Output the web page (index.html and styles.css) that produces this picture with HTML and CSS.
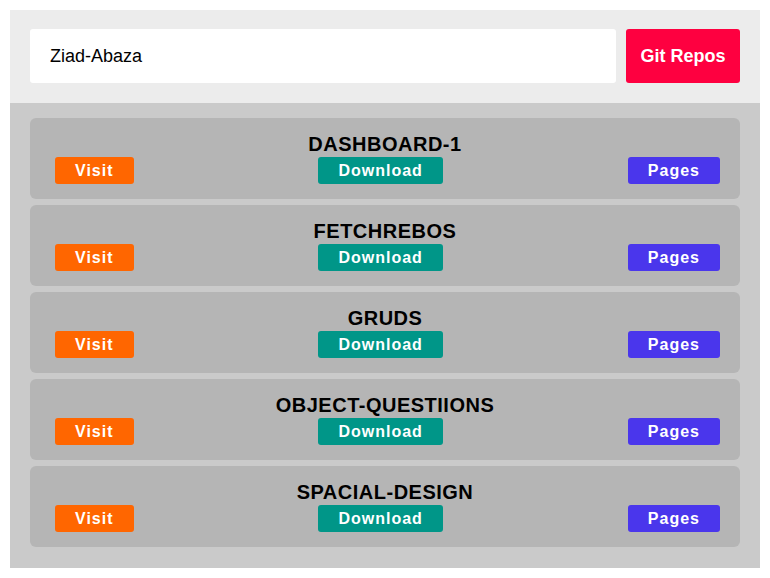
FILE: index.html
```html
<!DOCTYPE html>
<html>
<head>
<meta charset="utf-8">
<link rel="stylesheet" href="styles.css">
</head>
<body>
<div class="app">
  <div class="search">
    <input class="search-input" type="text" value="Ziad-Abaza">
    <button class="search-btn">Git Repos</button>
  </div>
  <div class="repos">
    <div class="repo">
      <div class="repo-name">DASHBOARD-1</div>
      <div class="repo-actions">
        <a class="btn visit">Visit</a>
        <a class="btn download">Download</a>
        <a class="btn pages">Pages</a>
      </div>
    </div>
    <div class="repo">
      <div class="repo-name">FETCHREBOS</div>
      <div class="repo-actions">
        <a class="btn visit">Visit</a>
        <a class="btn download">Download</a>
        <a class="btn pages">Pages</a>
      </div>
    </div>
    <div class="repo">
      <div class="repo-name">GRUDS</div>
      <div class="repo-actions">
        <a class="btn visit">Visit</a>
        <a class="btn download">Download</a>
        <a class="btn pages">Pages</a>
      </div>
    </div>
    <div class="repo">
      <div class="repo-name">OBJECT-QUESTIIONS</div>
      <div class="repo-actions">
        <a class="btn visit">Visit</a>
        <a class="btn download">Download</a>
        <a class="btn pages">Pages</a>
      </div>
    </div>
    <div class="repo">
      <div class="repo-name">SPACIAL-DESIGN</div>
      <div class="repo-actions">
        <a class="btn visit">Visit</a>
        <a class="btn download">Download</a>
        <a class="btn pages">Pages</a>
      </div>
    </div>
  </div>
</div>
</body>
</html>
```
FILE: styles.css
```css
* { box-sizing: border-box; }
html, body { background: #fff; }
body {
  margin: 10px;
  font-family: "Liberation Sans", Arial, sans-serif;
}
.app { width: 750px; }
.search {
  background: #ececec;
  padding: 19px 20px 20px 20px;
  display: flex;
  gap: 10px;
}
.search-input {
  flex: 1;
  height: 54px;
  border: none;
  border-radius: 3px;
  background: #fff;
  padding: 0 20px;
  font-family: "Liberation Sans", Arial, sans-serif;
  font-size: 18px;
  color: #000;
  outline: none;
}
.search-btn {
  width: 114px;
  height: 54px;
  border: none;
  border-radius: 3px;
  background: #fe0040;
  color: #fff;
  font-family: "Liberation Sans", Arial, sans-serif;
  font-weight: bold;
  font-size: 18px;
  padding: 0;
}
.repos {
  background: #cacaca;
  padding: 15px 20px 21px 20px;
  display: flex;
  flex-direction: column;
  gap: 6px;
}
.repo {
  background: #b5b5b5;
  border-radius: 6px;
  padding: 15px 20px 15px 25px;
  height: 81px;
}
.repo-name {
  text-align: center;
  font-weight: bold;
  font-size: 20px;
  letter-spacing: 0.5px;
  line-height: 23px;
  color: #000;
  padding-left: 0;
  margin-left: -5px;
}
.repo-actions {
  display: flex;
  justify-content: space-between;
  margin-top: 1px;
}
.btn {
  display: block;
  height: 27px;
  line-height: 27px;
  padding: 0 20px;
  border-radius: 3px;
  color: #fff;
  font-weight: bold;
  font-size: 16px;
  letter-spacing: 1px;
  text-decoration: none;
}
.visit { background: #ff6600; }
.download { background: #009688; }
.pages { background: #4a36ec; }
```
